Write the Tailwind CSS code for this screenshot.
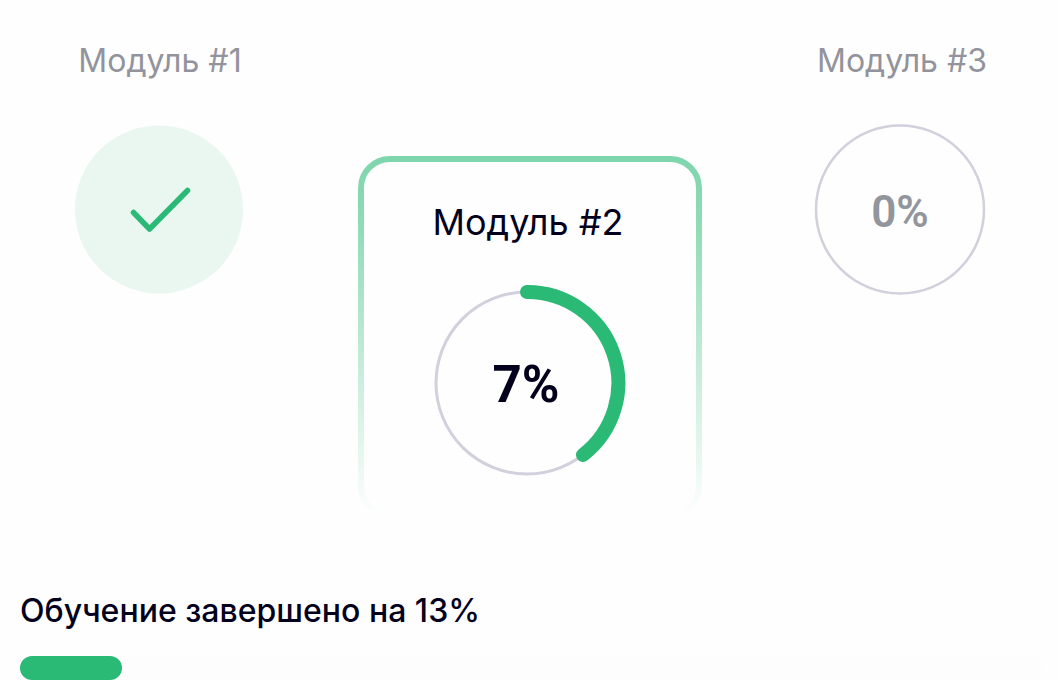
<!DOCTYPE html>
<html lang="ru">
<head>
<meta charset="utf-8">
<meta name="viewport" content="width=device-width, initial-scale=1">
<title>Прогресс обучения</title>
<script src="https://cdn.jsdelivr.net/npm/@tailwindcss/browser@4"></script>
</head>
<body class="bg-[#fefefe] font-['Inter','Liberation_Sans',sans-serif] text-[#02001c]">
<main class="flex flex-col overflow-hidden">
  <div class="flex items-start justify-between pl-[74px] pr-[72px] pt-[41px]">
    <section class="flex w-[172px] flex-col items-center">
      <h2 class="whitespace-nowrap text-[32px] leading-10 text-[#92939c]">Модуль #1</h2>
      <svg class="mt-[43px] size-[172px]" viewBox="0 0 172 172" fill="none" role="img" aria-label="Завершён">
        <circle cx="85" cy="85.500" r="84" fill="#eaf7f1"/>
        <path d="M59.500 88.500 75.500 105 113.500 66.500" stroke="#2aba76" stroke-width="5.500" stroke-linecap="round" stroke-linejoin="round"/>
      </svg>
    </section>

    <section class="relative mt-[115px] flex w-[344px] flex-col items-center pb-8 pr-1 pt-[46px]">
      <svg class="absolute inset-0 size-full" viewBox="0 0 344 362" preserveAspectRatio="none" fill="none" aria-hidden="true">
        <defs>
          <linearGradient id="frame" x1="0" y1="0" x2="0" y2="1">
            <stop offset="0" stop-color="#2aba76" stop-opacity=".6"/>
            <stop offset=".2" stop-color="#2aba76" stop-opacity=".51"/>
            <stop offset="1" stop-color="#2aba76" stop-opacity="0"/>
          </linearGradient>
        </defs>
        <rect x="3" y="3" width="338" height="356" rx="29" stroke="url(#frame)" stroke-width="6"/>
      </svg>
      <h2 class="whitespace-nowrap text-[36px] leading-10">Модуль #2</h2>
      <div class="mt-10 grid size-[204px] place-items-center">
        <svg class="col-start-1 row-start-1 size-full" viewBox="0 0 204 204" fill="none" aria-hidden="true">
          <circle cx="101" cy="101" r="91" stroke="#d1d0dd" stroke-width="3"/>
          <path d="M101 10A91 91 0 0 1 157 173" stroke="#2aba76" stroke-width="14" stroke-linecap="round"/>
        </svg>
        <span class="col-start-1 row-start-1 pr-1 font-['Roboto',sans-serif] text-[51px] font-bold leading-none">7%</span>
      </div>
    </section>

    <section class="flex w-[172px] flex-col items-center">
      <h2 class="whitespace-nowrap pl-1 text-[32px] leading-10 text-[#92939c]">Модуль #3</h2>
      <div class="mt-[43px] grid size-[172px] place-items-center">
        <svg class="col-start-1 row-start-1 size-full" viewBox="0 0 172 172" fill="none" aria-hidden="true">
          <circle cx="86" cy="85.500" r="84" stroke="#d1d0dd" stroke-width="2.500"/>
        </svg>
        <span class="col-start-1 row-start-1 pt-1 font-['Roboto',sans-serif] text-[44px] font-semibold leading-none text-[#92959c]">0%</span>
      </div>
    </section>
  </div>

  <section class="mt-[73px] pl-5 pr-4">
    <p id="total" class="text-[32px] font-[450] leading-10">Обучение завершено на 13%</p>
    <div class="mt-[25px] h-6 rounded-full bg-[#fdfdfd]" role="progressbar" aria-labelledby="total" aria-valuemin="0" aria-valuemax="100" aria-valuenow="13">
      <div class="h-full w-1/10 rounded-full bg-[#2aba76]"></div>
    </div>
  </section>
</main>
</body>
</html>
